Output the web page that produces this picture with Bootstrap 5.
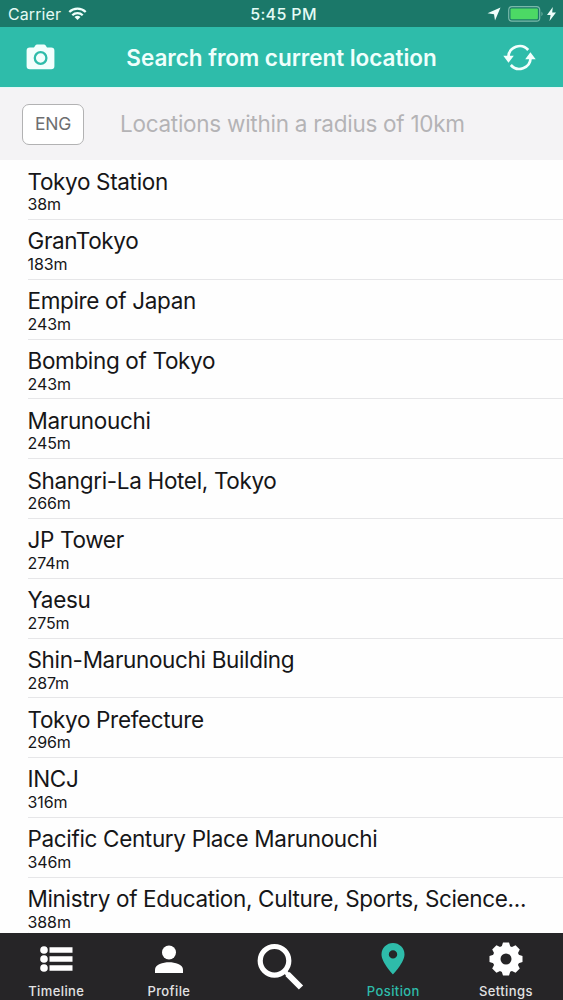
<!DOCTYPE html>
<html lang="en">
<head>
<meta charset="utf-8">
<meta name="viewport" content="width=device-width, initial-scale=1">
<title>Search from current location</title>
<link href="https://cdn.jsdelivr.net/npm/bootstrap@5.3.0/dist/css/bootstrap.min.css" rel="stylesheet">
<style>
body{font-family:Inter,"Liberation Sans",sans-serif;color:#161618;background:#fefefe;height:1000px;overflow:hidden}
svg{display:block;flex:none}
.status{height:27px;background:#1b7869;color:#e4fbf5;font-size:16px;line-height:27px;padding:1px 7px 0 8px}
.status .side{flex:1 1 0}
.carrier{letter-spacing:.1px}
.wifi{margin-left:7px}
.clock{font-weight:500;font-size:16px;letter-spacing:.35px;padding-left:3px}
.topbar{height:60px;background:#2ebcaa;color:#effffc;padding:0 27px 0 26px}
.topbar h1{font-size:22.5px;font-weight:600;letter-spacing:-.03px;margin:0;line-height:60px;padding:1px 0 0 5px}
.filter{height:73px;background:#f4f3f5;border-top:1px solid #e3f8f7;padding-left:22px}
.lang{width:62px;height:41px;border:1.5px solid #b2b2b3;border-radius:7px;background:#fff;color:#6e6e70;font-size:17.5px;letter-spacing:-.2px;padding:0;line-height:38px}
.radius-label{margin-left:36px;font-size:22.5px;color:#b4b3b6;letter-spacing:-.27px}
.places{height:773px;overflow:hidden;padding-left:27.5px}
.place{height:59.79px;border:0;border-bottom:1px solid #e6e6e8;border-radius:0;background:none;color:inherit;padding:7.3px 0 0}
.place:first-child{height:60.1px;padding-top:7.6px}
.place-name{font-size:22.5px;line-height:27px;letter-spacing:-.34px;white-space:nowrap}
.place-dist{font-size:16px;line-height:19px;letter-spacing:-.1px;padding-top:.7px}
.tabs{height:67px;background:#262527;color:#fff}
.tab{flex:1 1 0;color:#fff;font-size:13px;font-weight:500;letter-spacing:.4px;padding:9px 0 0}
.tab:hover{color:#fff}
.tab span{line-height:16px;margin-top:7px;color:#e2e2e3}
.tab.current,.tab.current span{color:#2ebcaa}
.tab.current>*,.tab:last-child>*{margin-right:1.5px}
</style>
</head>
<body class="d-flex flex-column">
<div class="status d-flex flex-shrink-0">
  <div class="side d-flex align-items-center"><span class="carrier">Carrier</span>
    <svg class="wifi" width="19" height="14" viewBox="0 0 20 15" fill="none" stroke="#f0fffb" stroke-width="2.4"><path d="M1.2 5.4a12.5 12.5 0 0 1 17.6 0M4.4 8.8a8 8 0 0 1 11.2 0"/><path d="M10 14l-3.2-3.2a4.6 4.6 0 0 1 6.400 0z" fill="#f0fffb" stroke="none"/></svg>
  </div>
  <span class="clock">5:45 PM</span>
  <div class="side d-flex align-items-center justify-content-end">
    <svg width="14" height="14" viewBox="0 0 14 14" fill="#f0fffb"><path d="M13.500.5L8 13.500 7 7.200.5 6.300z"/></svg>
    <svg style="margin-left:7px" width="36" height="16" viewBox="0 0 36 16"><rect x=".7" y=".7" width="31" height="14.4" rx="3.2" fill="none" stroke="#79b9aa" stroke-width="1.2"/><rect x="2.5" y="2.5" width="27.4" height="10.8" rx="1" fill="#4cd965"/><path d="M33.500 5.500q2.200 2.400 0 4.800z" fill="#79b9aa"/></svg>
    <svg style="margin-left:3px" width="9" height="14" viewBox="0 0 9 14" fill="#f0fffb"><path d="M5.800 0L0 8h3.600L2.500 14 9 5.500H5.200z"/></svg>
  </div>
</div>
<header class="topbar d-flex align-items-center justify-content-between flex-shrink-0">
  <svg width="29" height="26" viewBox="0 0 29 26"><path fill="#f2fffd" d="M3.800 3.400H8L9.500 1.200Q10 .6 11 .6h7q1 0 1.500.6L21 3.400h4.200Q28.400 3.400 28.400 6.400v15.800q0 3-3.200 3H3.800q-3.200 0-3.200-3V6.400q0-3 3.200-3z"/><circle cx="14.600" cy="14" r="5.800" fill="none" stroke="#2ebcaa" stroke-width="2.300"/></svg>
  <h1>Search from current location</h1>
  <svg width="33" height="27" viewBox="0 0 33 27"><g fill="none" stroke="#f2fffd" stroke-width="2.700"><path d="M5.400 13A11.300 11.300 0 0 1 25.200 6"/><path d="M27.600 14A11.300 11.300 0 0 1 7.800 21"/></g><path fill="#f2fffd" d="M.3 11.700h10.500l-5.300 7zM22.200 15.300h10.500l-5.300-7z"/></svg>
</header>
<div class="filter d-flex align-items-center flex-shrink-0">
  <button class="btn lang" type="button">ENG</button>
  <span class="radius-label">Locations within a radius of 10km</span>
</div>
<main class="places list-group flex-shrink-0">
  <div class="place list-group-item flex-shrink-0"><div class="place-name">Tokyo Station</div><div class="place-dist">38m</div></div>
  <div class="place list-group-item flex-shrink-0"><div class="place-name">GranTokyo</div><div class="place-dist">183m</div></div>
  <div class="place list-group-item flex-shrink-0"><div class="place-name">Empire of Japan</div><div class="place-dist">243m</div></div>
  <div class="place list-group-item flex-shrink-0"><div class="place-name">Bombing of Tokyo</div><div class="place-dist">243m</div></div>
  <div class="place list-group-item flex-shrink-0"><div class="place-name">Marunouchi</div><div class="place-dist">245m</div></div>
  <div class="place list-group-item flex-shrink-0"><div class="place-name">Shangri-La Hotel, Tokyo</div><div class="place-dist">266m</div></div>
  <div class="place list-group-item flex-shrink-0"><div class="place-name">JP Tower</div><div class="place-dist">274m</div></div>
  <div class="place list-group-item flex-shrink-0"><div class="place-name">Yaesu</div><div class="place-dist">275m</div></div>
  <div class="place list-group-item flex-shrink-0"><div class="place-name">Shin-Marunouchi Building</div><div class="place-dist">287m</div></div>
  <div class="place list-group-item flex-shrink-0"><div class="place-name">Tokyo Prefecture</div><div class="place-dist">296m</div></div>
  <div class="place list-group-item flex-shrink-0"><div class="place-name">INCJ</div><div class="place-dist">316m</div></div>
  <div class="place list-group-item flex-shrink-0"><div class="place-name">Pacific Century Place Marunouchi</div><div class="place-dist">346m</div></div>
  <div class="place list-group-item flex-shrink-0"><div class="place-name">Ministry of Education, Culture, Sports, Science...</div><div class="place-dist">388m</div></div>
</main>
<nav class="tabs nav flex-nowrap flex-shrink-0">
  <a class="tab nav-link d-flex flex-column align-items-center" href="#">
    <svg width="33" height="34" viewBox="0 0 33 34" fill="#fff"><circle cx="4" cy="8" r="3.800"/><circle cx="4" cy="17" r="3.800"/><circle cx="4" cy="26" r="3.800"/><path d="M9.500 5.300H32.500v5.400H9.500zM9.500 14.300H32.500v5.400H9.500zM9.500 23.300H32.500v5.400H9.500z"/></svg>
    <span>Timeline</span></a>
  <a class="tab nav-link d-flex flex-column align-items-center" href="#">
    <svg width="28" height="34" viewBox="0 0 28 34" fill="#fff"><circle cx="14" cy="10.500" r="7"/><path d="M0 31v-3.500C0 22.700 8 20.300 14 20.300s14 2.400 14 7.200V31z"/></svg>
    <span>Profile</span></a>
  <a class="tab nav-link d-flex flex-column align-items-center" href="#" aria-label="Search">
    <svg width="48" height="48" viewBox="0 0 48 48" fill="none" stroke="#fff"><circle cx="17.500" cy="18.800" r="14.300" stroke-width="5.200"/><path d="M28 29.500l4 4" stroke-width="4"/><path d="M30.500 32L44 45.500" stroke-width="6"/></svg></a>
  <a class="tab current nav-link d-flex flex-column align-items-center" href="#">
    <svg width="24" height="34" viewBox="0 0 24 34" fill="#2ebcaa"><path fill-rule="evenodd" d="M12 1A11.500 11.500 0 0 1 23.500 12.500C23.500 20.500 12 32.500 12 32.500S.5 20.500.5 12.500A11.500 11.500 0 0 1 12 1zm0 7.200a4.200 4.200 0 1 0 0 8.400a4.200 4.200 0 0 0 0-8.400z"/></svg>
    <span>Position</span></a>
  <a class="tab nav-link d-flex flex-column align-items-center" href="#">
    <svg width="34" height="34" viewBox="0 0 34 34"><g fill="#fff"><circle cx="17" cy="17" r="13.400"/><g id="teeth"><path id="tooth" d="M12.200 6L14 .5h6L21.800 6v22L20 33.500h-6L12.200 28z"/><use href="#tooth" transform="rotate(90 17 17)"/></g><use href="#teeth" transform="rotate(45 17 17)"/></g><circle cx="17" cy="17" r="5.500" fill="#262527"/></svg>
    <span>Settings</span></a>
</nav>
<script src="https://cdn.jsdelivr.net/npm/bootstrap@5.3.0/dist/js/bootstrap.bundle.min.js"></script>
</body>
</html>
